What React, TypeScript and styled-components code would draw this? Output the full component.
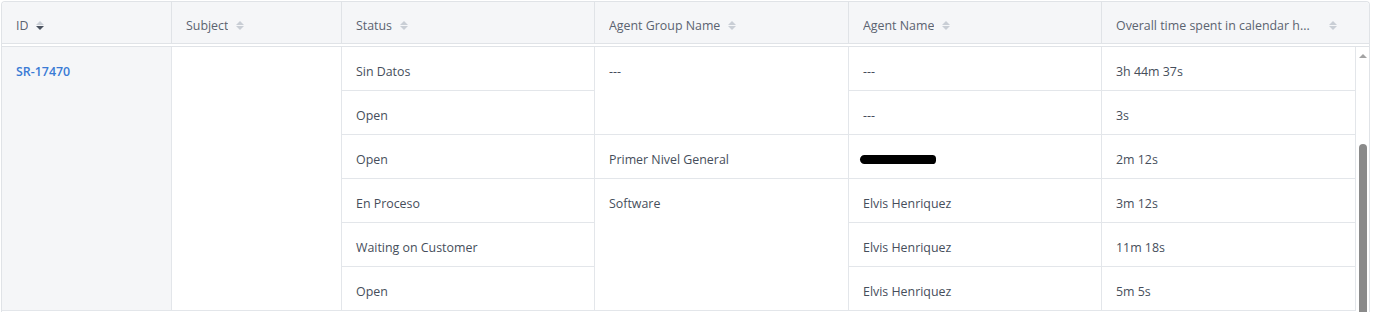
import React from 'react'
import styled, { createGlobalStyle } from 'styled-components'

const GlobalStyle = createGlobalStyle`
  html, body {
    margin: 0;
    padding: 0;
    height: 312px;
    overflow: hidden;
    background: #fff;
  }
  body {
    font-family: 'Open Sans', 'Noto Sans', Arial, sans-serif;
    font-size: 12.4px;
    color: #464e5b;
  }
`

const COLS = '170px 170px 253px 254px 253px'

const TableFrame = styled.div`
  margin: 1px 0 0 1px;
  width: 1369px;
  box-sizing: border-box;
  border: 1px solid #e0e3e7;
  border-bottom: none;
  border-radius: 4px 4px 0 0;
  background: #fff;
`

const HeaderRow = styled.div`
  display: grid;
  grid-template-columns: ${COLS} 1fr;
  height: 41px;
  background: #f5f6f8;
  border-bottom: 1px solid #e0e3e7;
  border-radius: 4px 4px 0 0;
`

const HeaderCell = styled.div<{ $last?: boolean }>`
  display: flex;
  align-items: center;
  gap: 8px;
  padding: 5px ${p => (p.$last ? '32px' : '14px')} 0 14px;
  border-right: ${p => (p.$last ? 'none' : '1px solid #e0e3e7')};
  color: #5b6370;
  white-space: nowrap;
  overflow: hidden;
`

const HeaderLabel = styled.span<{ $grow?: boolean }>`
  flex: ${p => (p.$grow ? '1 1 auto' : '0 1 auto')};
  overflow: hidden;
  text-overflow: ellipsis;
`

const SortWrap = styled.span`
  display: inline-flex;
  flex-direction: column;
  gap: 1px;
  flex: none;
`

const Tri = styled.span<{ $dir: 'up' | 'down'; $active?: boolean }>`
  width: 0;
  height: 0;
  border-left: 4px solid transparent;
  border-right: 4px solid transparent;
  ${p =>
    p.$dir === 'up'
      ? `border-bottom: 4px solid ${p.$active ? '#4b5360' : '#c9ced5'};`
      : `border-top: 4px solid ${p.$active ? '#4b5360' : '#c9ced5'};`}
`

const BodyWrap = styled.div`
  display: flex;
  margin-top: 2px;
  border-top: 1px solid #e0e3e7;
`

const BodyGrid = styled.div`
  display: grid;
  grid-template-columns: ${COLS} 254px;
  grid-auto-rows: 44px;
  width: 1354px;
`

const Cell = styled.div<{ $col: number; $row: number; $span?: number; $shade?: boolean }>`
  grid-column: ${p => p.$col};
  grid-row: ${p => p.$row} / span ${p => p.$span || 1};
  box-sizing: border-box;
  padding: 15px 14px 0;
  line-height: 20px;
  border-right: 1px solid #e3e6ea;
  border-bottom: 1px solid #e3e6ea;
  background: ${p => (p.$shade ? '#f5f6f8' : '#fff')};
  white-space: nowrap;
  overflow: hidden;
`

const IdLink = styled.a`
  color: #3a7bd5;
  font-weight: 600;
  text-decoration: none;
`

const Redacted = styled.span`
  display: inline-block;
  width: 76px;
  height: 9px;
  margin: 5px 0 0 -3px;
  background: #000;
  border-radius: 5px 4px 4px 5px;
  vertical-align: top;
`

const ScrollTrack = styled.div`
  width: 13px;
  display: flex;
  flex-direction: column;
  align-items: center;
  padding-top: 7px;
  box-sizing: border-box;
`

const ScrollArrow = styled.span`
  width: 0;
  height: 0;
  border-left: 4px solid transparent;
  border-right: 4px solid transparent;
  border-bottom: 4px solid #a3a3a3;
`

const ScrollThumb = styled.div`
  width: 8px;
  height: 200px;
  margin-top: 86px;
  background: #8a8a8a;
  border-radius: 4px 4px 0 0;
`

const SortIcon: React.FC<{ active?: 'down' }> = ({ active }) => (
  <SortWrap>
    <Tri $dir="up" />
    <Tri $dir="down" $active={active === 'down'} />
  </SortWrap>
)

const headers = ['ID', 'Subject', 'Status', 'Agent Group Name', 'Agent Name']

const rows = [
  { status: 'Sin Datos', agent: '---', time: '3h 44m 37s' },
  { status: 'Open', agent: '---', time: '3s' },
  { status: 'Open', agent: null, time: '2m 12s' },
  { status: 'En Proceso', agent: 'Elvis Henriquez', time: '3m 12s' },
  { status: 'Waiting on Customer', agent: 'Elvis Henriquez', time: '11m 18s' },
  { status: 'Open', agent: 'Elvis Henriquez', time: '5m 5s' }
]

const groups = [
  { name: '---', row: 1, span: 2 },
  { name: 'Primer Nivel General', row: 3, span: 1 },
  { name: 'Software', row: 4, span: 3 }
]

const App: React.FC = () => {
  return (
    <>
      <GlobalStyle />
      <TableFrame>
        <HeaderRow>
          {headers.map((h, i) => (
            <HeaderCell key={h}>
              <HeaderLabel>{h}</HeaderLabel>
              <SortIcon active={i === 0 ? 'down' : undefined} />
            </HeaderCell>
          ))}
          <HeaderCell $last>
            <HeaderLabel $grow>Overall time spent in calendar h...</HeaderLabel>
            <SortIcon />
          </HeaderCell>
        </HeaderRow>
        <BodyWrap>
          <BodyGrid>
            <Cell $col={1} $row={1} $span={6} $shade>
              <IdLink href="#">SR-17470</IdLink>
            </Cell>
            <Cell $col={2} $row={1} $span={6} />
            {rows.map((r, i) => (
              <Cell key={`s${i}`} $col={3} $row={i + 1}>
                {r.status}
              </Cell>
            ))}
            {groups.map(g => (
              <Cell key={g.name} $col={4} $row={g.row} $span={g.span}>
                {g.name}
              </Cell>
            ))}
            {rows.map((r, i) => (
              <Cell key={`a${i}`} $col={5} $row={i + 1}>
                {r.agent ?? <Redacted />}
              </Cell>
            ))}
            {rows.map((r, i) => (
              <Cell key={`t${i}`} $col={6} $row={i + 1}>
                {r.time}
              </Cell>
            ))}
          </BodyGrid>
          <ScrollTrack>
            <ScrollArrow />
            <ScrollThumb />
          </ScrollTrack>
        </BodyWrap>
      </TableFrame>
    </>
  )
}

export default App
